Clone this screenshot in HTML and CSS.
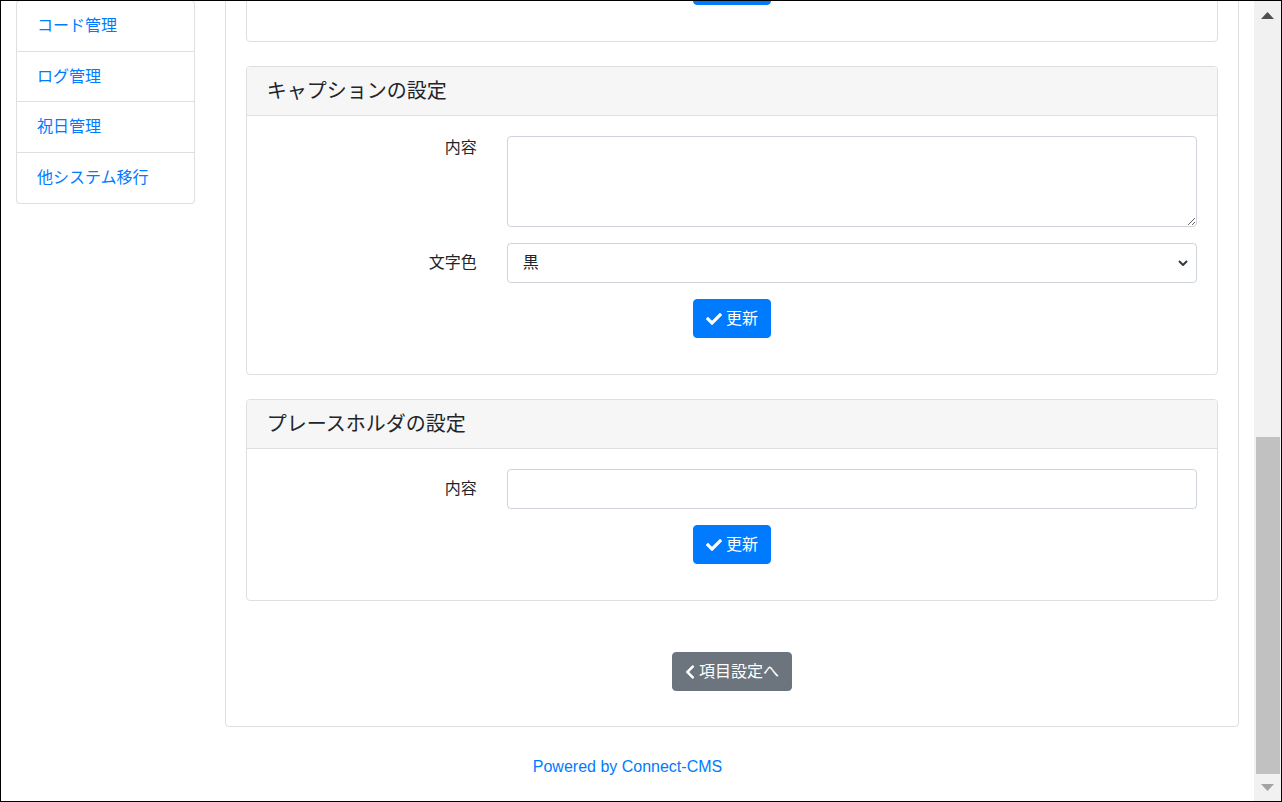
FILE: index.html
```html
<!DOCTYPE html>
<html lang="ja">
<head>
<meta charset="utf-8">
<title>項目設定</title>
<link rel="stylesheet" href="styles.css">
</head>
<body>
<div class="window">
  <div class="viewport">
    <div class="page">
      <div class="layout">
        <aside class="sidebar">
          <nav class="list-group">
            <a class="list-item" href="#">コード管理</a>
            <a class="list-item" href="#">ログ管理</a>
            <a class="list-item" href="#">祝日管理</a>
            <a class="list-item" href="#">他システム移行</a>
          </nav>
        </aside>
        <main class="main">
          <div class="card">
            <div class="card-body">
              <section class="card sub">
                <div class="card-body">
                  <div class="btn-row">
                    <button class="btn btn-primary" type="button"><svg class="ico-check" viewBox="0 0 512 512"><path d="M173.898 439.404l-166.4-166.4c-9.997-9.997-9.997-26.206 0-36.204l36.203-36.204c9.997-9.998 26.207-9.998 36.204 0L192 312.69 432.095 72.596c9.997-9.997 26.207-9.997 36.204 0l36.203 36.204c9.997 9.997 9.997 26.206 0 36.204l-294.4 294.401c-9.998 9.997-26.207 9.997-36.204-.001z"/></svg>更新</button>
                  </div>
                </div>
              </section>

              <section class="card sub">
                <div class="card-header"><h5 class="card-title">キャプションの設定</h5></div>
                <div class="card-body">
                  <div class="form-row">
                    <label class="form-label">内容</label>
                    <div class="form-field"><textarea class="control textarea"></textarea></div>
                  </div>
                  <div class="form-row">
                    <label class="form-label col-form">文字色</label>
                    <div class="form-field">
                      <div class="select-wrap">
                        <select class="control select"><option>黒</option></select>
                        <svg class="chev" viewBox="0 0 10 6"><path d="M1 1 L5 5 L9 1"/></svg>
                      </div>
                    </div>
                  </div>
                  <div class="btn-row">
                    <button class="btn btn-primary" type="button"><svg class="ico-check" viewBox="0 0 512 512"><path d="M173.898 439.404l-166.4-166.4c-9.997-9.997-9.997-26.206 0-36.204l36.203-36.204c9.997-9.998 26.207-9.998 36.204 0L192 312.69 432.095 72.596c9.997-9.997 26.207-9.997 36.204 0l36.203 36.204c9.997 9.997 9.997 26.206 0 36.204l-294.4 294.401c-9.998 9.997-26.207 9.997-36.204-.001z"/></svg>更新</button>
                  </div>
                </div>
              </section>

              <section class="card sub">
                <div class="card-header"><h5 class="card-title">プレースホルダの設定</h5></div>
                <div class="card-body">
                  <div class="form-row">
                    <label class="form-label col-form">内容</label>
                    <div class="form-field"><input class="control" type="text"></div>
                  </div>
                  <div class="btn-row">
                    <button class="btn btn-primary" type="button"><svg class="ico-check" viewBox="0 0 512 512"><path d="M173.898 439.404l-166.4-166.4c-9.997-9.997-9.997-26.206 0-36.204l36.203-36.204c9.997-9.998 26.207-9.998 36.204 0L192 312.69 432.095 72.596c9.997-9.997 26.207-9.997 36.204 0l36.203 36.204c9.997 9.997 9.997 26.206 0 36.204l-294.4 294.401c-9.998 9.997-26.207 9.997-36.204-.001z"/></svg>更新</button>
                  </div>
                </div>
              </section>

              <div class="back-row">
                <button class="btn btn-secondary" type="button"><svg class="ico-chevron" viewBox="0 0 320 512"><path d="M34.52 239.03L228.87 44.69c9.37-9.37 24.57-9.37 33.94 0l22.67 22.67c9.36 9.36 9.37 24.52.04 33.9L131.49 256l154.02 154.75c9.34 9.38 9.32 24.54-.04 33.9l-22.67 22.67c-9.37 9.37-24.57 9.37-33.94 0L34.52 272.97c-9.37-9.37-9.37-24.57 0-33.94z"/></svg>項目設定へ</button>
              </div>
            </div>
          </div>
        </main>
      </div>
      <footer class="footer"><a href="#">Powered by Connect-CMS</a></footer>
    </div>
  </div>
  <div class="scrollbar">
    <div class="sb-btn"><svg class="sb-arrow" viewBox="0 0 13 7"><polygon points="0,7 6.5,0 13,7"/></svg></div>
    <div class="sb-track"><div class="sb-thumb"></div></div>
    <div class="sb-btn sb-down"><svg class="sb-arrow" viewBox="0 0 13 7"><polygon points="0,0 13,0 6.5,7"/></svg></div>
  </div>
</div>
</body>
</html>
```
FILE: styles.css
```css
html, body {
  margin: 0;
  padding: 0;
}

body {
  font-family: "Liberation Sans", "Noto Sans CJK JP", sans-serif;
  font-size: 16px;
  color: #212529;
  background: #fff;
}

.window {
  width: 1282px;
  height: 802px;
  box-sizing: border-box;
  border: 1px solid #000;
  display: flex;
  overflow: hidden;
}

.viewport {
  flex: 1 1 auto;
  min-width: 0;
  overflow: hidden;
}

/* page scrolled to the bottom */
.page {
  margin-top: -77px;
}

.layout {
  display: flex;
  align-items: flex-start;
}

.sidebar {
  flex: 0 0 16.6667%;
  box-sizing: border-box;
  padding: 0 15px;
}

.list-group {
  display: flex;
  flex-direction: column;
  margin-top: 76px;
}

.list-item {
  display: block;
  padding: 12px 20px;
  line-height: 25.67px;
  border: 1px solid #dfdfdf;
  border-top-width: 0;
  color: #007bff;
  text-decoration: none;
  white-space: nowrap;
}

.list-item:first-child {
  border-top-width: 1px;
  border-radius: 4px 4px 0 0;
}

.list-item:last-child {
  border-radius: 0 0 4px 4px;
}

.main {
  flex: 1 1 auto;
  min-width: 0;
  padding: 0 15px;
}

.card {
  border: 1px solid #dfdfdf;
  border-radius: 4px;
  background: #fff;
}

.card.sub {
  margin-bottom: 24px;
}

.card-header {
  background: #f6f6f6;
  border-bottom: 1px solid #dfdfdf;
  padding: 12px 20px;
  border-radius: 3px 3px 0 0;
}

.card-title {
  margin: 0;
  font-size: 20px;
  font-weight: 400;
  line-height: 24px;
  color: #212529;
}

.card-body {
  padding: 20px;
}

.form-row {
  display: flex;
  margin: 0 -15px 16px;
}

.form-label {
  flex: 0 0 25%;
  box-sizing: border-box;
  padding: 0 15px;
  text-align: right;
  line-height: 24px;
}

.form-label.col-form {
  padding-top: 8px;
}

.form-field {
  flex: 0 0 75%;
  box-sizing: border-box;
  padding: 0 15px;
}

.control {
  display: block;
  width: 100%;
  box-sizing: border-box;
  height: 40px;
  margin: 0;
  padding: 6px 12px;
  border: 1px solid #ced4da;
  border-radius: 4px;
  font: inherit;
  line-height: 24px;
  color: #495057;
  background: #fff;
}

.textarea {
  height: 91px;
  resize: vertical;
}

.select-wrap {
  position: relative;
}

.select {
  -webkit-appearance: none;
  appearance: none;
  padding-left: 15px;
  color: #212529;
}

.chev {
  position: absolute;
  right: 9px;
  top: 50%;
  width: 10px;
  height: 6px;
  margin-top: -3px;
  fill: none;
  stroke: #343a40;
  stroke-width: 2;
  pointer-events: none;
}

.btn-row {
  text-align: center;
  margin-bottom: 16px;
}

.btn {
  display: inline-flex;
  align-items: center;
  height: 39px;
  box-sizing: border-box;
  padding: 0 12px;
  border: 1px solid transparent;
  border-radius: 4px;
  font: inherit;
  font-size: 16px;
  line-height: 24px;
  color: #fff;
  cursor: pointer;
}

.btn-primary {
  background: #007bff;
  border-color: #007bff;
}

.btn-secondary {
  background: #6c757d;
  border-color: #6c757d;
}

.ico-check {
  width: 16px;
  height: 16px;
  fill: #fff;
  margin-right: 4px;
}

.ico-chevron {
  width: 10px;
  height: 16px;
  fill: #fff;
  margin-right: 4px;
}

.back-row {
  text-align: center;
  margin-top: 51px;
  margin-bottom: 15px;
}

.footer {
  text-align: center;
  padding: 28px 0 24px;
  line-height: 24px;
}

.footer a {
  color: #007bff;
  text-decoration: none;
}

/* simulated browser scrollbar */
.scrollbar {
  flex: 0 0 27px;
  background: #f1f1f1;
  display: flex;
  flex-direction: column;
}

.sb-btn {
  height: 28px;
  display: flex;
  align-items: center;
  justify-content: center;
}

.sb-down {
  height: 27px;
}

.sb-arrow {
  width: 13px;
  height: 7px;
  fill: #505050;
}

.sb-down .sb-arrow {
  fill: #a3a3a3;
}

.sb-track {
  flex: 1 1 auto;
  display: flex;
  flex-direction: column;
  justify-content: flex-end;
}

.sb-thumb {
  height: 337px;
  margin: 0 1px 0 2px;
  background: #c1c1c1;
}
```
